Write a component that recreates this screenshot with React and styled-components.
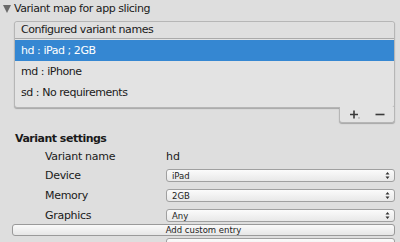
import React from 'react'
import styled, { createGlobalStyle } from 'styled-components'

const GlobalStyle = createGlobalStyle`
  html, body {
    margin: 0;
    padding: 0;
    background: #dedede;
  }
  body {
    font-family: "DejaVu Sans", "Liberation Sans", sans-serif;
    font-size: 11px;
    color: #1a1a1a;
  }
`

const variants = [
  { name: 'hd : iPad ; 2GB', selected: true },
  { name: 'md : iPhone' },
  { name: 'sd : No requirements' },
]

const settings = [
  { label: 'Device', value: 'iPad' },
  { label: 'Memory', value: '2GB' },
  { label: 'Graphics', value: 'Any' },
]

const Page = styled.div`
  width: 400px;
  height: 242px;
  overflow: hidden;
`

const Foldout = styled.div`
  display: flex;
  align-items: center;
  height: 17px;
  padding-left: 3px;
  gap: 3px;
  letter-spacing: -0.45px;
`

const Triangle = styled.span`
  width: 0;
  height: 0;
  border-left: 4.5px solid transparent;
  border-right: 4.5px solid transparent;
  border-top: 8px solid #6a6a6a;
`

const ListBox = styled.div`
  margin: 4px 5px 0 14px;
  border: 1px solid #b6b6b6;
  border-radius: 3px;
  background: #e3e3e3;
  box-shadow: 0 1px 1px rgba(0, 0, 0, 0.25);
  padding-bottom: 4px;
`

const ListHeader = styled.div`
  height: 16px;
  line-height: 16px;
  padding-left: 6px;
  background: #dfdfdf;
  border-bottom: 1px solid #aaaaaa;
  border-radius: 3px 3px 0 0;
  letter-spacing: -0.45px;
`

const Row = styled.div`
  height: 21px;
  line-height: 21px;
  padding-left: 6px;
  margin-top: ${(p) => (p.first ? '1px' : '0')};
  background: ${(p) => (p.selected ? '#3587d2' : 'transparent')};
  color: ${(p) => (p.selected ? '#ffffff' : '#1a1a1a')};
  letter-spacing: -0.45px;
`

const FooterRow = styled.div`
  display: flex;
  justify-content: flex-end;
  padding-right: 5px;
`

const Footer = styled.div`
  width: 56px;
  height: 16px;
  margin-top: -1px;
  border: 1px solid #b6b6b6;
  border-top: none;
  border-radius: 0 0 3px 3px;
  background: #e3e3e3;
  box-shadow: 0 1px 1px rgba(0, 0, 0, 0.25);
  display: flex;
  align-items: center;
  justify-content: space-around;
  padding: 0 2px;
  box-sizing: border-box;
`

const IconBtn = styled.svg`
  display: block;
`

const SectionTitle = styled.div`
  font-weight: bold;
  margin: 8px 0 0 15px;
  height: 16px;
  line-height: 16px;
  letter-spacing: -0.5px;
`

const Grid = styled.div`
  display: grid;
  grid-template-columns: 121px 229px;
  row-gap: 7px;
  margin: 4px 0 0 45px;
  align-items: center;
`

const Label = styled.div`
  height: 11px;
  line-height: 11px;
  letter-spacing: -0.3px;
`

const Value = styled.div`
  height: 11px;
  line-height: 11px;
`

const Select = styled.div`
  height: 11px;
  border: 1px solid #a0a0a0;
  border-radius: 3px;
  background: linear-gradient(#fbfbfb, #e8e8e8);
  display: flex;
  align-items: center;
  justify-content: space-between;
  padding: 0 4px 0 5px;
  font-size: 8.5px;
  color: #222;
`

const Arrows = styled.svg`
  display: block;
`

const Button = styled.div`
  margin: 2px 5px 0 12px;
  height: 10px;
  border: 1px solid #9a9a9a;
  border-radius: 3px;
  background: linear-gradient(#fafafa, #e6e6e6);
  font-size: 8.5px;
  line-height: 10px;
  text-align: center;
  color: #222;
`

const Partial = styled.div`
  margin: 2px 5px 0 166px;
  height: 10px;
  border: 1px solid #a0a0a0;
  border-radius: 3px;
  background: linear-gradient(#fbfbfb, #e8e8e8);
`

const PlusIcon = () => (
  <IconBtn width="12" height="10" viewBox="0 0 12 10">
    <path d="M1 4.5h8M5 0.5v8" stroke="#3a3a3a" strokeWidth="1.6" />
    <path d="M9.5 7.5l1 0 -0.5 1.5z" fill="#3a3a3a" />
  </IconBtn>
)

const MinusIcon = () => (
  <IconBtn width="10" height="10" viewBox="0 0 10 10">
    <path d="M0.5 4.5h9" stroke="#3a3a3a" strokeWidth="1.6" />
  </IconBtn>
)

const UpDown = () => (
  <Arrows width="5" height="7" viewBox="0 0 5 7">
    <path d="M2.5 0L4.5 2.6H0.5z M2.5 7L4.5 4.4H0.5z" fill="#333" />
  </Arrows>
)

export default function App() {
  return (
    <Page>
      <GlobalStyle />
      <Foldout>
        <Triangle />
        <span>Variant map for app slicing</span>
      </Foldout>
      <ListBox>
        <ListHeader>Configured variant names</ListHeader>
        {variants.map((v, i) => (
          <Row key={v.name} first={i === 0} selected={v.selected}>
            {v.name}
          </Row>
        ))}
      </ListBox>
      <FooterRow>
        <Footer>
          <PlusIcon />
          <MinusIcon />
        </Footer>
      </FooterRow>
      <SectionTitle>Variant settings</SectionTitle>
      <Grid>
        <Label>Variant name</Label>
        <Value>hd</Value>
        {settings.map((s) => (
          <React.Fragment key={s.label}>
            <Label>{s.label}</Label>
            <Select>
              <span>{s.value}</span>
              <UpDown />
            </Select>
          </React.Fragment>
        ))}
      </Grid>
      <Button>Add custom entry</Button>
      <Partial />
    </Page>
  )
}
